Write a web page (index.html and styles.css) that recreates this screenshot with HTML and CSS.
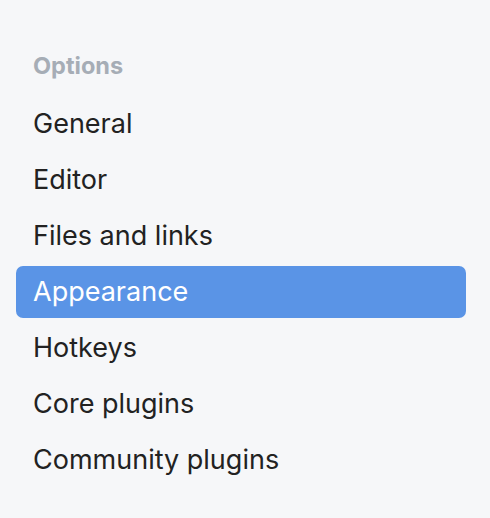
FILE: index.html
```html
<!DOCTYPE html>
<html>
<head>
<meta charset="utf-8">
<link rel="stylesheet" href="styles.css">
</head>
<body>
<nav class="sidebar">
  <div class="section-title">Options</div>
  <div class="nav-list">
    <div class="nav-item">General</div>
    <div class="nav-item">Editor</div>
    <div class="nav-item">Files and links</div>
    <div class="nav-item is-active">Appearance</div>
    <div class="nav-item">Hotkeys</div>
    <div class="nav-item">Core plugins</div>
    <div class="nav-item">Community plugins</div>
  </div>
</nav>
</body>
</html>
```

FILE: styles.css
```css
html, body {
  margin: 0;
  padding: 0;
  background: #f6f7f9;
}
body {
  width: 490px;
  height: 518px;
  overflow: hidden;
  font-family: Inter, "Noto Sans", sans-serif;
  -webkit-font-smoothing: antialiased;
}
.sidebar {
  padding: 44px 24px 0 16px;
}
.section-title {
  padding: 0 17px;
  height: 44px;
  line-height: 44px;
  font-size: 23.5px;
  font-weight: 700;
  color: #a6adb6;
  margin-bottom: 10px;
}
.nav-list {
  display: flex;
  flex-direction: column;
  gap: 4px;
}
.nav-item {
  height: 52px;
  line-height: 52px;
  padding: 0 17px;
  font-size: 27px;
  color: #222222;
  border-radius: 7px;
}
.nav-item.is-active {
  background: #5a94e6;
  color: #ffffff;
}
```
